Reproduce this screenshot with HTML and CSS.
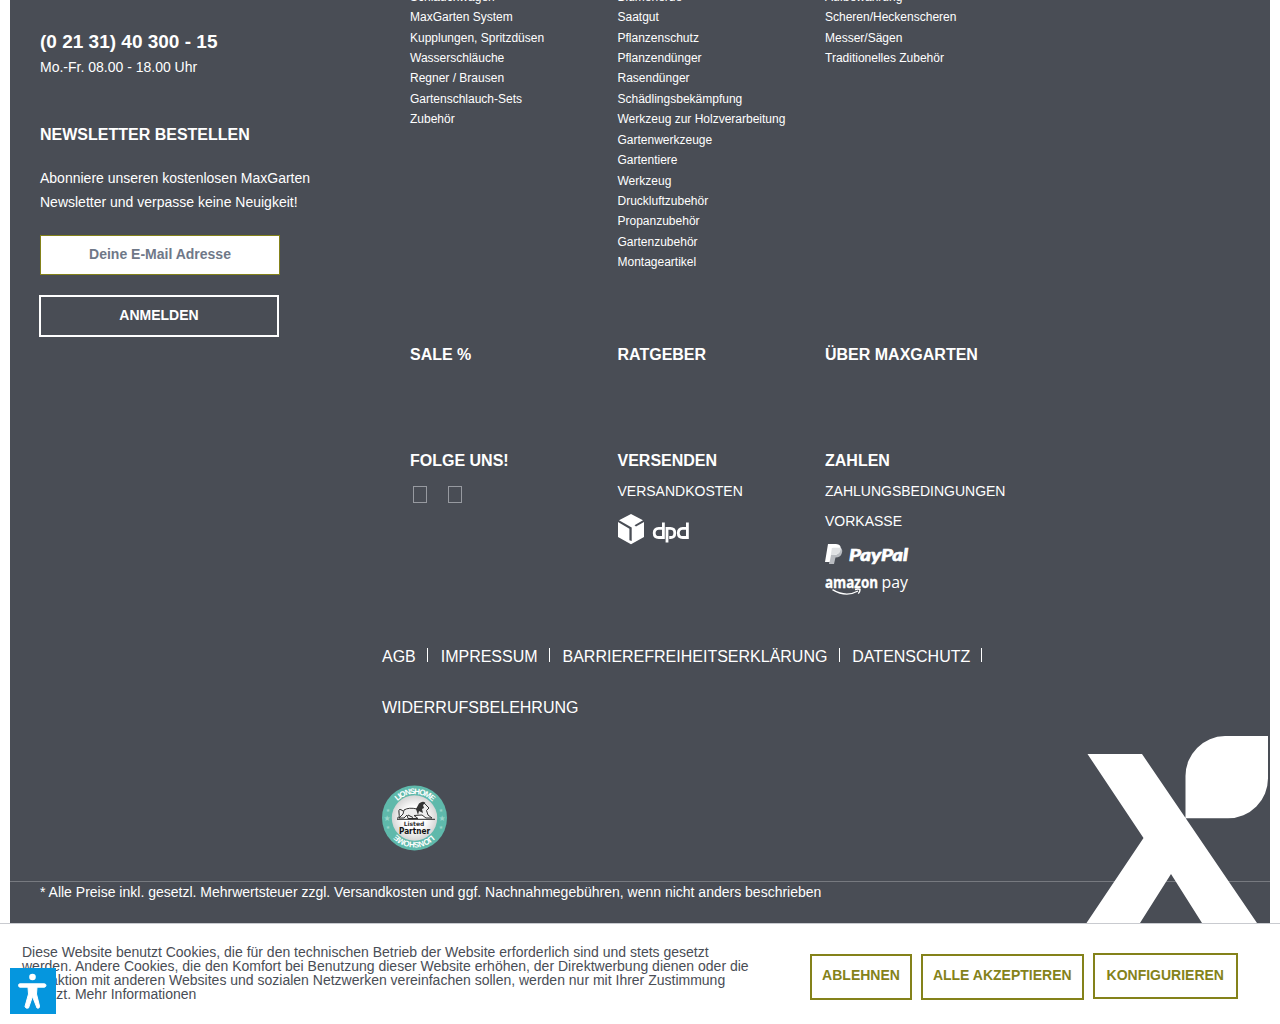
FILE: index.html
```html
<!DOCTYPE html>
<html lang="de">
<head>
<meta charset="utf-8">
<title>MaxGarten</title>
<link rel="stylesheet" href="styles.css">
</head>
<body>
<footer class="footer">
  <div class="footer-main">
    <section class="service">
      <p class="phone">(0 21 31) 40 300 - 15</p>
      <p class="hours">Mo.-Fr. 08.00 - 18.00 Uhr</p>
      <h3 class="heading">NEWSLETTER BESTELLEN</h3>
      <p class="intro">Abonniere unseren kostenlosen MaxGarten<br>Newsletter und verpasse keine Neuigkeit!</p>
      <input class="email" type="email" placeholder="Deine E-Mail Adresse">
      <button class="subscribe">ANMELDEN</button>
    </section>
    <div class="columns">
      <ul class="links">
        <li>Schlauchwagen</li><li>MaxGarten System</li><li>Kupplungen, Spritzdüsen</li><li>Wasserschläuche</li><li>Regner / Brausen</li><li>Gartenschlauch-Sets</li><li>Zubehör</li>
      </ul>
      <ul class="links">
        <li>Blumenerde</li><li>Saatgut</li><li>Pflanzenschutz</li><li>Pflanzendünger</li><li>Rasendünger</li><li>Schädlingsbekämpfung</li><li>Werkzeug zur Holzverarbeitung</li><li>Gartenwerkzeuge</li><li>Gartentiere</li><li>Werkzeug</li><li>Druckluftzubehör</li><li>Propanzubehör</li><li>Gartenzubehör</li><li>Montageartikel</li>
      </ul>
      <ul class="links">
        <li>Aufbewahrung</li><li>Scheren/Heckenscheren</li><li>Messer/Sägen</li><li>Traditionelles Zubehör</li>
      </ul>
      <h3 class="heading">SALE %</h3>
      <h3 class="heading">RATGEBER</h3>
      <h3 class="heading">ÜBER MAXGARTEN</h3>
      <div>
        <h3 class="heading">FOLGE UNS!</h3>
        <div class="social"><i></i><i></i></div>
      </div>
      <div>
        <h3 class="heading">VERSENDEN</h3>
        <p class="service-link">VERSANDKOSTEN</p>
        <svg class="dpd" width="72" height="32" viewBox="0 0 72 32">
          <path fill="#fff" d="M13 0 25 6.300 16.500 11.300 18 12.600 26 8.100V23L13 30.200 0 23V8.100L11.400 14.700V26.200L13.700 27V13.600L1 6.300z"/>
          <g fill="none" stroke="#fff" stroke-width="2.800" transform="translate(-.8 0)">
            <path d="M46.200 8.500V23.500H41.500Q37 23.500 37 19T41.500 14.300H46.200"/>
            <path d="M49.800 28.500V14.300H53.200Q57.600 14.300 57.600 19T53.200 23.500H52"/>
            <path d="M70.200 8.500V23.500H65.500Q61.100 23.500 61.100 19T65.500 14.300H70.200"/>
          </g>
        </svg>
      </div>
      <div>
        <h3 class="heading">ZAHLEN</h3>
        <p class="service-link">ZAHLUNGSBEDINGUNGEN</p>
        <p class="service-link">VORKASSE</p>
        <svg class="paypal" width="84" height="21" viewBox="0 0 84 21">
          <path fill="#b8bbc0" d="M6 4H16Q18 6 16.800 9.200 15.500 13.500 10.500 13.500L9 20H4z"/>
          <path fill="#fff" d="M3 0H11Q16.500 .5 15.600 5 14.500 11 8.500 11H6L4.700 18H0z"/>
          <path fill="#e0e2e4" d="M6.800 4.500Q7 3.800 8 3.800H15.600Q16 10.800 8.500 11H5.800z"/>
          <text class="paypal-name" x="24" y="16.500" textLength="59" lengthAdjust="spacingAndGlyphs">PayPal</text>
        </svg>
        <svg class="amazon" width="84" height="21" viewBox="0 0 84 21">
          <text class="amazon-name" x="0" y="11.500" textLength="53" lengthAdjust="spacingAndGlyphs">amazon</text>
          <text class="amazon-pay" x="56.500" y="11.500" textLength="26.500" lengthAdjust="spacingAndGlyphs">pay</text>
          <path d="M7.500 13.600Q21 21.800 33 15M30 13.500Q33 12.600 35 13.400 35.200 15.500 33.300 17.600" fill="none" stroke="#fff" stroke-width="1.400"/>
        </svg>
      </div>
    </div>
  </div>
  <nav class="legal">
    <span>AGB</span><i class="bar"></i><span>IMPRESSUM</span><i class="bar"></i><span>BARRIEREFREIHEITSERKLÄRUNG</span><i class="bar"></i><span>DATENSCHUTZ</span><i class="bar"></i>
    <span>WIDERRUFSBELEHRUNG</span>
  </nav>
  <svg class="seal" width="66" height="66" viewBox="0 0 66 66">
    <defs>
      <path id="arc-top" d="M8.500 33A24 24 0 0 1 56.500 33"/>
      <path id="arc-bottom" d="M56.500 33A24 24 0 0 1 8.500 33"/>
      <radialGradient id="disc"><stop offset=".5" stop-color="#fff"/><stop offset="1" stop-color="#d5d5d5"/></radialGradient>
    </defs>
    <circle cx="32.500" cy="33" r="32.500" fill="#5fb9ab"/>
    <circle cx="32.500" cy="33" r="22.700" fill="url(#disc)"/>
    <text class="ring"><textPath href="#arc-top" startOffset="50%">LIONSHOME</textPath></text>
    <text class="ring"><textPath href="#arc-bottom" startOffset="50%">LIONSHOME</textPath></text>
    <g class="stars"><text x="5" y="36">★</text><text x="60" y="36">★</text><text class="s" x="6" y="27">★</text><text class="s" x="59" y="27">★</text><text class="s" x="6" y="44">★</text><text class="s" x="59" y="44">★</text></g>
    <path fill="#eee" stroke="#333" stroke-width="1" d="M38 20Q42 16.500 44 20L47 23 44.500 25.500 46 30 50 33H44L40 30 32 30.500 36 33.500H26L25 30 22 33H17L21 29 22 25Q27 22 35 24z"/>
    <path fill="#333" d="M37 18.500Q41 15.500 43.500 18L41 20 42 23 40 24 41 28 37 26 36 30 34 24z"/>
    <path d="M21 26Q16 22 17 28T15 33M15 34.300H53M26 30 31 32.500" fill="none" stroke="#222" stroke-width="1"/>
    <text class="listed" x="32" y="41.200">Listed</text>
    <text class="partner" x="32.500" y="48.800" textLength="31" lengthAdjust="spacingAndGlyphs">Partner</text>
  </svg>
  <svg class="leaf-x" width="182" height="187" viewBox="0 0 182 187">
    <path fill="#fff" d="M.500 18H55L170 187H115L84 138 53 187H-.5L56.500 102zM98.500 82.300V40A40 40 0 0 1 138 0H181V42A40 40 0 0 1 141 82.300z"/>
  </svg>
  <p class="prices">* Alle Preise inkl. gesetzl. Mehrwertsteuer zzgl. Versandkosten und ggf. Nachnahmegebühren, wenn nicht anders beschrieben</p>
</footer>
<div class="cookie">
  <p class="cookie-text">Diese Website benutzt Cookies, die für den technischen Betrieb der Website erforderlich sind und stets gesetzt<br>werden. Andere Cookies, die den Komfort bei Benutzung dieser Website erhöhen, der Direktwerbung dienen oder die<br>Interaktion mit anderen Websites und sozialen Netzwerken vereinfachen sollen, werden nur mit Ihrer Zustimmung<br>gesetzt. Mehr Informationen</p>
  <div class="cookie-actions">
    <button class="decline">ABLEHNEN</button>
    <button class="accept">ALLE AKZEPTIEREN</button>
    <button class="configure">KONFIGURIEREN</button>
  </div>
</div>
<div class="a11y">
  <svg width="46" height="46" viewBox="0 0 46 46">
    <circle cx="22.500" cy="9" r="3.300" fill="#fff"/>
    <path fill="#fff" stroke="#fff" stroke-linejoin="round" d="M10 15.800H34.500Q36 16 36 17.400T34.500 19.200H27L26.500 26 29.500 38Q29.700 41 27 40L22.500 28.500 18.500 40Q15.500 41 15 38.500L18.500 26 18 19.200H10Q8.500 19 8.500 17.400T10 15.800z"/>
  </svg>
</div>
</body>
</html>
```
FILE: styles.css
```css
* { box-sizing: border-box; }
body {
  margin: 0;
  height: 1024px;
  overflow: hidden;
  background: #fff;
  color: #fff;
  font: 14px/24px "Liberation Sans", Arial, sans-serif;
}
p, h3, ul { margin: 0; padding: 0; }
ul { list-style: none; }
svg { display: block; }
.footer {
  position: relative;
  display: flow-root;
  width: 1260px;
  height: 923px;
  margin-left: 10px;
  overflow: hidden;
  background: #494d55;
}
.footer-main {
  display: grid;
  grid-template-columns: 370px 1fr;
  height: 631px;
  padding-left: 30px;
}
.service { padding-top: 30px; }
.phone { font-size: 19px; font-weight: bold; }
.hours { margin-top: 1px; }
.heading { font-size: 16px; line-height: 24px; white-space: nowrap; }
.service .heading { margin: 44px 0 19px; }
.intro { white-space: nowrap; }
.email, .subscribe {
  display: block;
  width: 240px;
  font: bold 14px/20px "Liberation Sans", Arial, sans-serif;
  text-align: center;
}
.email {
  height: 40px;
  margin-top: 21px;
  padding: 0 0 3px;
  border: 1px solid #84821a;
}
.email::placeholder { color: #6f7888; opacity: 1; }
.subscribe {
  height: 42px;
  margin: 20px 0 0 -1px;
  padding: 0 0 2px;
  border: 2px solid #fff;
  background: none;
  color: #fff;
}
.columns {
  display: grid;
  grid-template-columns: 207.5px 207.5px 207.5px;
  grid-template-rows: 356px 106px auto;
  margin-top: -13px;
}
.links { margin-top: -.15px; font-size: 12px; line-height: 20.4px; white-space: nowrap; }
.social { display: flex; gap: 21px; padding: 13px 0 0 3px; }
.social i { width: 14px; height: 17px; border: 1px solid #979aa0; }
.service-link { line-height: 30px; white-space: nowrap; }
.heading + .service-link { margin-top: 3px; }
.dpd { margin-top: 8px; }
.paypal { margin-top: 8px; }
.amazon { margin-top: 11px; }
.paypal-name { font: italic 900 17px Lato, sans-serif; fill: #fff; stroke: #fff; stroke-width: .6px; }
.amazon-name { font: bold 16px "Open Sans", sans-serif; fill: #fff; stroke: #fff; stroke-width: .3px; }
.amazon-pay { font: 16px "Open Sans", sans-serif; fill: #fff; }
.legal {
  display: flex;
  flex-wrap: wrap;
  width: 640px;
  margin-left: 372px;
  font-size: 16px;
  line-height: 51px;
}
.bar { width: 1px; height: 14px; margin: 17px 12.8px 0 11.1px; background: #fff; }
.seal { margin: 52px 0 0 372px; }
.ring { font: bold 8px "Liberation Sans Narrow", "Liberation Sans", sans-serif; letter-spacing: -1.2px; fill: #fff; text-anchor: middle; }
.stars { font: 8px "DejaVu Sans", sans-serif; fill: #9bd6cc; text-anchor: middle; }
.s { font-size: 5px; }
.listed { font: bold 6px "DejaVu Sans", sans-serif; fill: #333; text-anchor: middle; }
.partner { font: bold 8px "DejaVu Sans", sans-serif; fill: #111; text-anchor: middle; }
.prices {
  margin-top: 30px;
  padding-left: 30px;
  border-top: 1px solid #777a80;
  line-height: 20px;
  white-space: nowrap;
}
.leaf-x { position: absolute; right: 1px; bottom: 0; z-index: 1; overflow: visible; }
.cookie {
  display: flex;
  height: 101px;
  padding-left: 22px;
  border-top: 1px solid #c9cbd0;
  background: #fff;
  color: #494d55;
}
.cookie-text { width: 788px; padding-top: 21px; line-height: 14px; white-space: nowrap; }
.cookie-actions { display: flex; padding-top: 30px; }
.cookie-actions button {
  height: 46px;
  padding: 0 0 4px;
  border: 2px solid #84821a;
  background: #fff;
  color: #84821a;
  font: bold 14px/20px "Liberation Sans", Arial, sans-serif;
}
.decline { width: 102px; margin-right: 9px; }
.accept { width: 162.5px; margin-right: 9px; }
.cookie-actions .configure { width: 145.5px; margin-top: -1px; padding-bottom: 2px; }
.a11y { position: absolute; left: 10px; top: 968px; width: 46px; height: 46px; background: #0596de; }
```
